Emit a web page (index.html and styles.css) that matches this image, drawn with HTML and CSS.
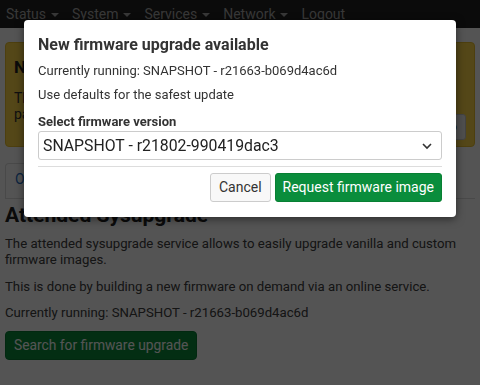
FILE: index.html
```html
<!DOCTYPE html>
<html lang="en">

<head>
    <meta charset="UTF-8">
    <title>Attended Sysupgrade</title>
    <link rel="stylesheet" href="styles.css">
</head>

<body>
    <div id="header">
        <a href="javascript:;" class="menu">Status <span class="caret"></span></a>
        <a href="javascript:;" class="menu">System <span class="caret"></span></a>
        <a href="javascript:;" class="menu">Services <span class="caret"></span></a>
        <a href="javascript:;" class="menu">Network <span class="caret"></span></a>
        <a href="javascript:;" class="menu">Logout</a>
    </div>

    <div id="maincontent">
        <div class="alert">
            <div class="alert-text">
                <h4>No password set!</h4>
                <p>There is no password set on this router. Please configure a root password to protect the web interface.</p>
            </div>
            <a href="javascript:;" class="btn-alert">Go</a>
        </div>

        <ul class="tabs">
            <li class="active"><a href="javascript:;">Overview</a></li>
        </ul>

        <h2>Attended Sysupgrade</h2>
        <p>The attended sysupgrade service allows to easily upgrade vanilla and custom firmware images.</p>
        <p>This is done by building a new firmware on demand via an online service.</p>
        <p>Currently running: SNAPSHOT - r21663-b069d4ac6d</p>
        <a href="javascript:;" class="btn-search">Search for firmware upgrade</a>
    </div>

    <div id="overlay"></div>

    <div id="modal">
        <h4>New firmware upgrade available</h4>
        <p>Currently running: SNAPSHOT - r21663-b069d4ac6d</p>
        <p>Use defaults for the safest update</p>
        <label for="version">Select firmware version</label>
        <div class="select">
            <span>SNAPSHOT - r21802-990419dac3</span>
            <svg width="12" height="8" viewBox="0 0 12 8">
                <path d="M2 2 L6 6 L10 2" fill="none" stroke="#333" stroke-width="1.6"/>
            </svg>
        </div>
        <div class="buttons">
            <a href="javascript:;" class="btn cancel">Cancel</a>
            <a href="javascript:;" class="btn primary">Request firmware image</a>
        </div>
    </div>
</body>

</html>
```

FILE: styles.css
```css
* {
    margin: 0;
    padding: 0;
    text-decoration: none;
    box-sizing: border-box;
}

body {
    font-family: Roboto, "Liberation Sans", sans-serif;
    font-size: 13.2px;
    color: #404040;
    background-color: #fff;
    height: 385px;
    overflow: hidden;
}

#header {
    display: flex;
    gap: 13.5px;
    height: 28px;
    padding: 4px 6px 0;
    background-color: #222;
}

.menu {
    color: #aaa;
    font-size: 14px;
    line-height: 20px;
}

.caret {
    display: inline-block;
    border-top: 4px solid #aaa;
    border-left: 4px solid transparent;
    border-right: 4px solid transparent;
    vertical-align: middle;
    margin-left: 1px;
}

#maincontent {
    padding: 14px 5px 0;
}

.alert {
    display: flex;
    align-items: flex-end;
    height: 105px;
    padding: 12px 8px 6px 8px;
    background-color: #ffd84a;
    border: 1px solid #e8c030;
    border-radius: 4px;
}

.alert-text {
    flex: 1;
    align-self: flex-start;
}

.alert h4 {
    font-size: 17px;
    font-weight: bold;
    color: #222;
    line-height: 24px;
}

.alert p {
    font-size: 14px;
    line-height: 19px;
    color: #333;
}

.btn-alert {
    padding: 4px 8px;
    background-color: #eee;
    border: 1px solid #ccc;
    border-radius: 3px;
    color: #333;
    height: 26px;
}

.tabs {
    list-style: none;
    display: flex;
    margin-top: 12px;
    border-bottom: 1px solid #ddd;
    height: 40px;
    padding-top: 4px;
}

.tabs li {
    border: 1px solid #ddd;
    border-bottom: none;
    border-radius: 4px 4px 0 0;
    padding: 7px 9px;
    font-size: 14px;
}

.tabs a {
    color: #1f6fc5;
}

h2 {
    font-size: 21px;
    font-weight: bold;
    color: #222;
    margin-top: 3px;
    line-height: 26px;
}

#maincontent p {
    line-height: 16px;
    margin-top: 10.5px;
}

#maincontent h2 + p {
    margin-top: 8px;
}

.btn-search {
    display: inline-block;
    margin-top: 10px;
    padding: 0 8px;
    height: 29px;
    line-height: 27px;
    font-size: 13.8px;
    background-color: #0a8d3c;
    border: 1px solid #087a33;
    border-radius: 4px;
    color: #fff;
}

#overlay {
    position: fixed;
    top: 0;
    left: 0;
    width: 100%;
    height: 100%;
    background-color: rgba(0, 0, 0, 0.67);
}

#modal {
    position: absolute;
    top: 20px;
    left: 24px;
    width: 432px;
    height: 197px;
    padding: 15px 14px 0;
    background-color: #fff;
    border-radius: 4px;
    box-shadow: 0 2px 8px rgba(0, 0, 0, 0.5);
}

#modal h4 {
    font-size: 16px;
    font-weight: bold;
    color: #333;
    line-height: 20px;
}

#modal p {
    font-size: 13px;
    color: #333;
    line-height: 16px;
    margin-top: 8px;
}

#modal label {
    display: block;
    font-size: 13px;
    font-weight: bold;
    color: #333;
    line-height: 16px;
    margin-top: 11px;
}

.select {
    display: flex;
    align-items: center;
    justify-content: space-between;
    height: 29px;
    margin-top: 1px;
    padding: 0 8px 0 4px;
    border: 1px solid #ccc;
    border-radius: 3px;
    font-size: 15.8px;
    color: #222;
}

.buttons {
    display: flex;
    justify-content: flex-end;
    gap: 4px;
    margin-top: 6px;
    padding-top: 6px;
    border-top: 1px solid #ddd;
}

.btn {
    height: 29px;
    line-height: 27px;
    padding: 0 8px;
    border-radius: 3px;
    font-size: 14px;
}

.cancel {
    color: #333;
    background-color: #f8f8f8;
    border: 1px solid #ccc;
}

.primary {
    padding: 0 7px;
    color: #fff;
    background-color: #0a8d3c;
    border: 1px solid #088033;
}
```
